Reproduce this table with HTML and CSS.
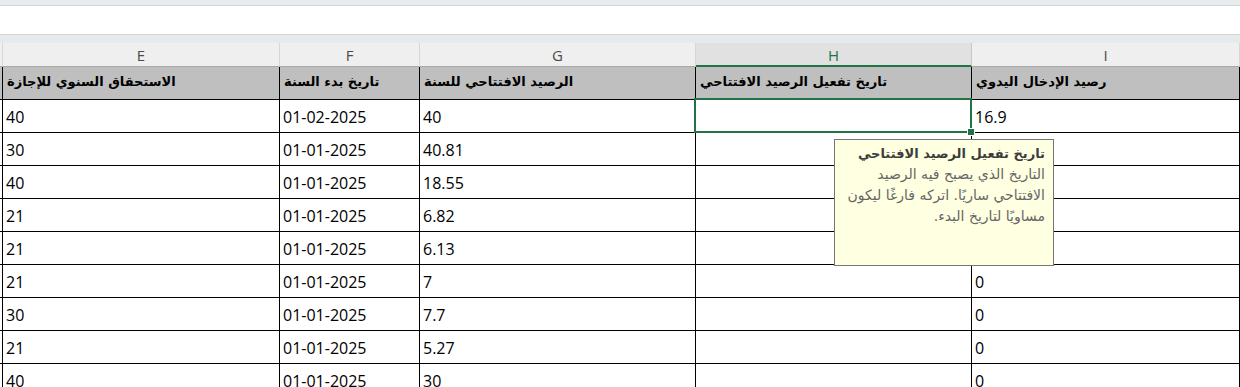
FILE: index.html
```html
<!DOCTYPE html>
<html lang="ar">
<head>
<meta charset="utf-8">
<title>Sheet</title>
<link rel="stylesheet" href="styles.css">
</head>
<body>
<div class="app">
  <div class="topbar"></div>
  <div class="formula"></div>
  <div class="band"></div>
  <div class="sheet">
    <div class="ch stub"></div>
    <div class="ch">E</div>
    <div class="ch">F</div>
    <div class="ch">G</div>
    <div class="ch ch-sel">H</div>
    <div class="ch">I</div>

    <div class="hd stub"><span class="dash">ـ</span></div>
    <div class="hd" dir="ltr"><span dir="rtl">الاستحقاق السنوي للإجازة</span></div>
    <div class="hd" dir="ltr"><span dir="rtl">تاريخ بدء السنة</span></div>
    <div class="hd" dir="ltr"><span dir="rtl">الرصيد الافتتاحي للسنة</span></div>
    <div class="hd" dir="ltr"><span dir="rtl">تاريخ تفعيل الرصيد الافتتاحي</span></div>
    <div class="hd" dir="ltr"><span dir="rtl">رصيد الإدخال اليدوي</span></div>

    <div class="c stub"></div><div class="c">40</div><div class="c">01-02-2025</div><div class="c">40</div><div class="c sel"><span class="handle"></span></div><div class="c">16.9</div>
    <div class="c stub"></div><div class="c">30</div><div class="c">01-01-2025</div><div class="c">40.81</div><div class="c"></div><div class="c"></div>
    <div class="c stub"></div><div class="c">40</div><div class="c">01-01-2025</div><div class="c">18.55</div><div class="c"></div><div class="c"></div>
    <div class="c stub"></div><div class="c">21</div><div class="c">01-01-2025</div><div class="c">6.82</div><div class="c"></div><div class="c"></div>
    <div class="c stub"></div><div class="c">21</div><div class="c">01-01-2025</div><div class="c">6.13</div><div class="c"></div><div class="c"></div>
    <div class="c stub"></div><div class="c">21</div><div class="c">01-01-2025</div><div class="c">7</div><div class="c"></div><div class="c">0</div>
    <div class="c stub"></div><div class="c">30</div><div class="c">01-01-2025</div><div class="c">7.7</div><div class="c"></div><div class="c">0</div>
    <div class="c stub"></div><div class="c">21</div><div class="c">01-01-2025</div><div class="c">5.27</div><div class="c"></div><div class="c">0</div>
    <div class="c stub"></div><div class="c">40</div><div class="c">01-01-2025</div><div class="c">30</div><div class="c"></div><div class="c">0</div>
  </div>
  <div class="tip" dir="rtl">
    <div class="tip-title">تاريخ تفعيل الرصيد الافتتاحي</div>
    <div class="tip-body">التاريخ الذي يصبح فيه الرصيد الافتتاحي ساريًا. اتركه فارغًا ليكون مساويًا لتاريخ البدء.</div>
  </div>
</div>
</body>
</html>
```
FILE: styles.css
```css
html, body {
  margin: 0;
  padding: 0;
  background: #ffffff;
  overflow: hidden;
}
.app {
  position: relative;
  width: 1240px;
  height: 387px;
  overflow: hidden;
  font-family: "Open Sans", "DejaVu Sans", sans-serif;
}
.topbar {
  height: 5px;
  background: #e8ebee;
  border-bottom: 1px solid #d2d4d6;
}
.formula {
  height: 28px;
  background: #ffffff;
  border-bottom: 1px solid #d2d4d6;
}
.band {
  height: 8px;
  background: #e7eaed;
}
.sheet {
  display: grid;
  grid-template-columns: 3px 277px 140px 276px 276px 268px;
  grid-template-rows: 24px 33px repeat(9, 33px);
}
.sheet > div {
  box-sizing: border-box;
  border-right: 1px solid #000;
  border-bottom: 1px solid #000;
  display: flex;
  align-items: flex-end;
  overflow: hidden;
  white-space: nowrap;
}
.sheet > .ch {
  background: #efefef;
  border-right: 1px solid #d6d6d6;
  border-bottom: 1px solid #a9a9a9;
  justify-content: center;
  align-items: center;
  font-size: 15px;
  color: #4a4a4a;
  padding-top: 1px;
}
.sheet > .ch.ch-sel {
  background: #e1e1e1;
  color: #217346;
  border-bottom: 2px solid #217346;
  border-right: 1px solid #c8c8c8;
}
.sheet > .hd {
  background: #bfbfbf;
  font-family: "DejaVu Sans", sans-serif;
  font-weight: bold;
  font-size: 13px;
  color: #000;
  padding: 0 0 7px 4px;
  line-height: 20px;
}
.sheet > .hd.stub {
  padding: 0;
}
.dash {
  font-size: 12px;
  margin-left: -6px;
}
.sheet > .c {
  font-size: 16px;
  color: #000;
  padding: 0 0 4px 3px;
  line-height: 22px;
}
.sheet > .stub {
  padding: 0;
}
.sheet > .c.sel {
  position: relative;
  overflow: visible;
}
.sel::after {
  content: "";
  position: absolute;
  left: -2px;
  top: -2px;
  right: -1px;
  bottom: -1px;
  border: 2px solid #217346;
}
.handle {
  position: absolute;
  right: -4px;
  bottom: -4px;
  width: 6px;
  height: 6px;
  background: #217346;
  border: 1px solid #ffffff;
  z-index: 2;
}
.tip {
  position: absolute;
  left: 834px;
  top: 139px;
  width: 220px;
  height: 127px;
  box-sizing: border-box;
  background: #ffffe1;
  border: 1px solid #767676;
  padding: 3px 8px 0 6px;
  font-family: "DejaVu Sans", sans-serif;
  font-size: 14px;
  line-height: 21px;
  text-align: right;
  z-index: 5;
}
.tip-title {
  font-weight: bold;
  font-size: 13px;
  color: #3c3c3c;
}
.tip-body {
  color: #666666;
}
```
